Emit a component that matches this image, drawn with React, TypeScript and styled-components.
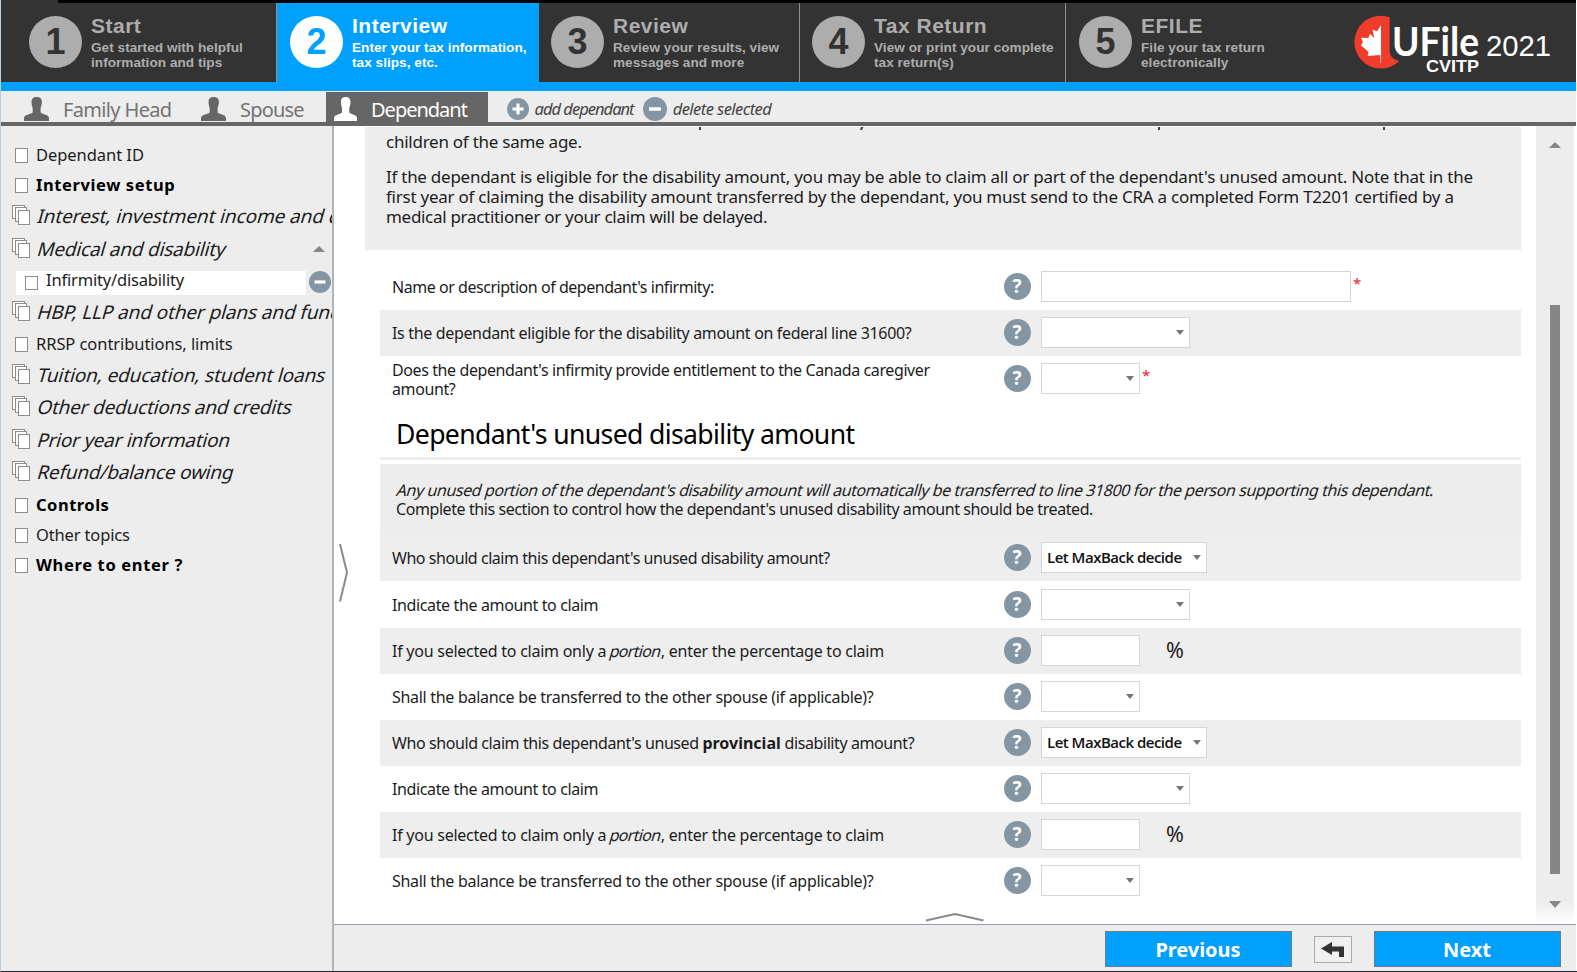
import React from "react";
import styled, { createGlobalStyle, css } from "styled-components";

const GlobalStyle = createGlobalStyle`
  *, *::before, *::after { box-sizing: border-box; }
  body { margin: 0; background: #fff; }
`;

const ui = `"Noto Sans", "Open Sans", sans-serif`;
const arial = `"Liberation Sans", Arial, sans-serif`;
const slate = "#8496a3";

const Window = styled.div`
  width: 1577px;
  height: 972px;
  overflow: hidden;
  display: flex;
  flex-direction: column;
  background: #fff;
  border-left: 1px solid #b9cde2;
  border-bottom: 1px solid #2a2a2e;
  font-family: ${ui};
  color: #1c1c1c;
`;

const TopEdge = styled.div`
  height: 3px;
  margin-right: 1px;
  background: linear-gradient(to right, #333 57px, #000 57px);
  flex: none;
`;

const Header = styled.header`
  display: flex;
  height: 88px;
  flex: none;
  margin-right: 1px;
  background: #333;
  border-bottom: 9px solid #00a0ff;
`;

const Step = styled.div<{ $w: number; $pad: number; $active?: boolean; $line?: boolean }>`
  width: ${(p) => p.$w}px;
  padding: 13px 0 0 ${(p) => p.$pad}px;
  display: flex;
  flex: none;
  color: ${(p) => (p.$active ? "#fff" : "#adadad")};
  background: ${(p) => (p.$active ? "#00a0ff" : "#333")};
  border-right: ${(p) => (p.$line ? "1px solid #8b8f92" : "none")};
  font-family: ${arial};
  font-weight: bold;
`;

const StepNumber = styled.div<{ $active?: boolean }>`
  width: 53px;
  height: 52px;
  border-radius: 50%;
  flex: none;
  background: ${(p) => (p.$active ? "#fff" : "#adadad")};
  color: ${(p) => (p.$active ? "#00a0ff" : "#333")};
  font-size: 36px;
  line-height: 51px;
  text-align: center;
`;

const StepText = styled.div`
  margin: -2px 0 0 9px;
  white-space: nowrap;
`;

const StepTitle = styled.div`
  font-size: 21px;
  line-height: 23px;
  letter-spacing: 0.5px;
`;

const StepNote = styled.div`
  margin-top: 3px;
  font-size: 13.6px;
  line-height: 15px;
  letter-spacing: 0.03px;
`;

const LogoArea = styled.div`
  margin-left: auto;
  width: 226px;
`;

const TabBar = styled.nav`
  display: flex;
  height: 35px;
  flex: none;
  margin-right: 1px;
  background: #ededed;
  border-bottom: 4px solid #666;
`;

const Tab = styled.div<{ $w: number; $pad: number; $active?: boolean }>`
  width: ${(p) => p.$w}px;
  padding-left: ${(p) => p.$pad}px;
  gap: 14px;
  display: flex;
  align-items: flex-start;
  flex: none;
  margin-top: 1px;
  background: ${(p) => (p.$active ? "#666" : "transparent")};
  color: ${(p) => (p.$active ? "#fff" : "#737373")};
  font-size: 20px;
  line-height: 35px;
  white-space: nowrap;
  svg { margin-top: 5px; flex: none; }
`;

const TabLabel = styled.span<{ $track: number }>`
  letter-spacing: ${(p) => p.$track}px;
`;

const TabAction = styled.div<{ $ml: number; $track: number }>`
  margin-left: ${(p) => p.$ml}px;
  gap: 6px;
  display: flex;
  align-items: center;
  font-size: 16.5px;
  font-style: italic;
  letter-spacing: ${(p) => p.$track}px;
  color: #444;
  white-space: nowrap;
  padding-top: 4px;
`;

const Body = styled.div`
  display: flex;
  flex: 1;
  min-height: 0;
`;

const Sidebar = styled.aside`
  width: 333px;
  flex: none;
  overflow: hidden;
  background: #ededed;
  border-right: 2px solid #aeb6bd;
  padding-top: 14px;
`;

const NavRow = styled.div<{ $h: number; $child?: boolean }>`
  display: flex;
  height: ${(p) => p.$h}px;
  align-items: flex-start;
  white-space: nowrap;
  ${(p) => p.$child && css`padding-left: 15px;`}
`;

const NavIcon = styled.span<{ $child?: boolean }>`
  width: ${(p) => (p.$child ? 30 : 35)}px;
  padding-left: ${(p) => (p.$child ? 9 : 11)}px;
  flex: none;
  display: flex;
`;

const NavLabel = styled.span<{ $kind: "plain" | "bold" | "group"; $track: number }>`
  font-size: ${(p) => (p.$kind === "group" ? 19 : 16.5)}px;
  line-height: ${(p) => (p.$kind === "group" ? 28 : 30)}px;
  font-weight: ${(p) => (p.$kind === "bold" ? 700 : 400)};
  letter-spacing: ${(p) => p.$track}px;
  color: ${(p) => (p.$kind === "bold" ? "#000" : "#1c1c1c")};
  ${(p) => p.$kind === "group" && css`
    transform: skewX(-16deg);
    margin-left: 2px;
  `}
`;

const SelectedBox = styled.div`
  display: flex;
  width: 290px;
  height: 24px;
  margin: 5px 3px 0 0;
  background: #fff;
  ${NavLabel} { line-height: 18px; }
`;

const Main = styled.main`
  flex: 1;
  min-width: 0;
  display: flex;
  flex-direction: column;
  position: relative;
`;

const Scroller = styled.div`
  display: flex;
  height: 798px;
  flex: none;
`;

const Page = styled.div`
  width: 1187px;
  margin-right: 15px;
  padding-left: 31px;
  flex: none;
`;

const Info = styled.section`
  height: 124px;
  background: #ededed;
  padding-left: 21px;
  font-size: 17px;
  line-height: 20px;
  white-space: nowrap;
  border-top: 1px solid #fafafa;
  p { margin: 0 0 15px; }
`;

const CutLine = styled.svg`
  display: block;
  width: 1020px;
  height: 5px;
`;

const Line = styled.span<{ $track: number; $slant?: boolean }>`
  display: block;
  width: fit-content;
  letter-spacing: ${(p) => p.$track}px;
  ${(p) => p.$slant && css`
    transform: skewX(-16deg);
    margin-left: 1px;
  `}
`;

const Slant = styled.em`
  display: inline-block;
  font-style: normal;
  letter-spacing: -0.7px;
  transform: skewX(-16deg);
`;

const Strong = styled.b`
  letter-spacing: 0;
`;

const Form = styled.section`
  padding-left: 15px;
`;

const Field = styled.div<{ $shade?: boolean; $h: number }>`
  display: flex;
  align-items: center;
  height: ${(p) => p.$h}px;
  padding: 0 0 1px 12px;
  background: ${(p) => (p.$shade ? "#eee" : "#fff")};
`;

const Question = styled.div<{ $track: number }>`
  width: 611.5px;
  flex: none;
  font-size: 16px;
  line-height: 19px;
  letter-spacing: ${(p) => p.$track}px;
  white-space: pre;
  padding-top: 2px;
`;

const Help = styled.div`
  width: 27px;
  height: 27px;
  border-radius: 50%;
  background: ${slate};
  color: #fff;
  font: bold 19px/27px ${ui};
  text-align: center;
  margin-right: 10.5px;
`;

const Box = styled.div<{ $w: number }>`
  width: ${(p) => p.$w}px;
  height: 31px;
  padding: 0 5px;
  display: flex;
  align-items: center;
  border: 1px solid #d6d6d6;
  background: #fff;
  font: 600 15px/29px "Open Sans", "Noto Sans", sans-serif;
  letter-spacing: -0.5px;
  white-space: nowrap;
  color: #111;
`;

const Caret = styled.i`
  margin-left: auto;
  border: 4px solid transparent;
  border-top: 5px solid #777;
  border-bottom: 0;
`;

const Required = styled.span`
  align-self: flex-start;
  margin: 8px 0 0 2px;
  font-size: 15px;
  line-height: 23px;
  color: #e8202a;
`;

const Percent = styled.span`
  margin-left: 26px;
  font-size: 21.5px;
  line-height: 28px;
`;

const SectionTitle = styled.h2`
  margin: 0;
  height: 58px;
  padding: 12px 0 0 16px;
  border-bottom: 3px solid #eee;
  font-size: 26.6px;
  font-weight: 400;
  line-height: 40px;
  letter-spacing: -0.64px;
  color: #000;
`;

const SectionNote = styled.div`
  height: 71.400px;
  margin-top: 4px;
  padding: 17px 0 0 16px;
  background: #ededed;
  font-size: 16px;
  line-height: 19px;
  white-space: nowrap;
`;

const Scrollbar = styled.div`
  width: 38px;
  display: flex;
  flex-direction: column;
  align-items: center;
  padding: 16px 0 0 0;
  background: linear-gradient(#ededed 775px, #fff);
`;

const Arrow = styled.i<{ $down?: boolean }>`
  border: 6px solid transparent;
  border-bottom: ${(p) => (p.$down ? "0" : "6px solid #868686")};
  border-top: ${(p) => (p.$down ? "7px solid #868686" : "0")};
`;

const Thumb = styled.div`
  width: 10px;
  height: 569px;
  margin: 157px 0 27px;
  background: #868686;
`;

const Footer = styled.footer`
  flex: 1;
  display: flex;
  align-items: flex-start;
  justify-content: flex-end;
  margin-right: 1px;
  padding: 6px 15.5px 0 0;
  background: #ededed;
  border-top: 1px solid #8f9ba6;
`;

const Button = styled.button`
  width: 187px;
  height: 36px;
  padding: 2px 0 0;
  border: 1px solid #6f7c88;
  background: #00a0ff;
  color: #fff;
  font: bold 20px/32px ${ui};
  letter-spacing: -0.05px;
`;

const BackButton = styled.button`
  width: 38px;
  height: 27px;
  margin: 5px 22px 0;
  padding: 0;
  display: flex;
  align-items: center;
  justify-content: center;
  border: 1px solid #a9a9a9;
  background: #f0f0f0;
`;

const Handle = styled.svg<{ $x: number; $y: number }>`
  position: absolute;
  left: ${(p) => p.$x}px;
  top: ${(p) => p.$y}px;
`;

const Person = ({ w, color }: { w: number; color: string }) => (
  <svg width={w} height="24" viewBox="0 0 25 24" preserveAspectRatio="none" fill={color}>
    <path d="M12.700 0C9.200 0 7.400 1.900 7.500 5c.1 2.600.5 4.400 1.200 6v3.800c0 .8-.3 1.200-1.100 1.500L2.300 18.300C.7 19 0 19.900 0 21.500V24h25v-2.500c0-1.600-.7-2.500-2.300-3.200l-5-2c-.8-.3-1.100-.7-1.100-1.500V11c.7-1.600 1.200-3.400 1.300-6 .1-3.100-1.700-5-5.200-5z" />
  </svg>
);

const Round = ({ size, plus }: { size: number; plus?: boolean }) => (
  <svg width={size} height={size} viewBox="0 0 24 24">
    <circle cx="12" cy="12" r="12" fill={slate} />
    <rect x="6" y="10.300" width="12" height="3.400" fill="#fff" />
    {plus && <rect x="10.300" y="6" width="3.400" height="12" fill="#fff" />}
  </svg>
);

const SinglePage = ({ top }: { top: number }) => (
  <svg width="17" height={top + 16} fill="#fff" stroke="#8c8c8c">
    <rect x={3.5} y={top + 0.5} width="12" height="14" />
  </svg>
);

const PageStack = () => (
  <svg width="19" height="24" fill="#fff" stroke="#8c8c8c">
    <rect x="0.500" y="3.500" width="12" height="13" />
    <rect x="3.500" y="5.500" width="11" height="14" />
    <rect x="6.500" y="8.500" width="11" height="14" />
  </svg>
);

const Logo = () => (
  <svg width="226" height="79">
    <path d="M39.700 14.300 A26.400 26.400 0 1 0 49.300 58 C43 56.500 39.700 53 39.700 48Z" fill="#f03d2b" />
    <path
      d="M31 22.300 27 28.300l-4.500-1.600 1.800 8.300-4.300-4-1.700 4-7.300-.300 1.900 4.300-1.900 3.300 7.500 6.700-.8 4L30.300 52l.2 8h.6z"
      fill="#fff"
    />
    <g fill="#fff">
      <text x="42" y="53" fontFamily="Lato, sans-serif" fontWeight="700" fontSize="40" textLength="87" lengthAdjust="spacingAndGlyphs">UFile</text>
      <text x="76" y="69" fontFamily="Liberation Sans, sans-serif" fontWeight="700" fontSize="17" textLength="53" lengthAdjust="spacingAndGlyphs">CVITP</text>
      <text x="136" y="53" fontFamily="Liberation Sans, sans-serif" fontSize="29.500" textLength="65" lengthAdjust="spacingAndGlyphs">2021</text>
    </g>
  </svg>
);

const steps = [
  { w: 276, pad: 28, title: "Start", note: ["Get started with helpful", "information and tips"], line: true },
  { w: 262, pad: 13, title: "Interview", note: ["Enter your tax information,", "tax slips, etc."], active: true },
  { w: 261, pad: 12, title: "Review", note: ["Review your results, view", "messages and more"], line: true },
  { w: 266, pad: 12, title: "Tax Return", note: ["View or print your complete", "tax return(s)"], line: true },
  { w: 220, pad: 13, title: "EFILE", note: ["File your tax return", "electronically"] },
];

type NavItem = { text: string; kind: "plain" | "bold" | "group"; h: number; track: number; open?: boolean; child?: boolean };

const nav: NavItem[] = [
  { text: "Dependant ID", kind: "plain", h: 30, track: -0.05 },
  { text: "Interview setup", kind: "bold", h: 32, track: 0.6 },
  { text: "Interest, investment income and donations", kind: "group", h: 33, track: -0.1 },
  { text: "Medical and disability", kind: "group", h: 31, track: -0.2, open: true },
  { text: "Infirmity/disability", kind: "plain", h: 32, track: -0.18, child: true },
  { text: "HBP, LLP and other plans and funds", kind: "group", h: 31, track: -0.12 },
  { text: "RRSP contributions, limits", kind: "plain", h: 32, track: -0.07 },
  { text: "Tuition, education, student loans", kind: "group", h: 32, track: -0.12 },
  { text: "Other deductions and credits", kind: "group", h: 33, track: -0.2 },
  { text: "Prior year information", kind: "group", h: 32, track: -0.27 },
  { text: "Refund/balance owing", kind: "group", h: 32, track: -0.2 },
  { text: "Controls", kind: "bold", h: 30, track: 0.5 },
  { text: "Other topics", kind: "plain", h: 30, track: -0.15 },
  { text: "Where to enter ?", kind: "bold", h: 30, track: 0.65 },
];

const NavArrow = styled(Arrow)`
  margin: 11px 7px 0 auto;
`;

const NavRemove = styled.span`
  margin-top: 5px;
`;

type FieldDef = { q: React.ReactNode; w: number; select?: boolean; value?: string; required?: boolean; percent?: boolean; track: number };

const eligibility: FieldDef[] = [
  { q: "Name or description of dependant's infirmity:", w: 310, required: true, track: -0.46 },
  { q: "Is the dependant eligible for the disability amount on federal line 31600?", w: 149, select: true, track: -0.34 },
  { q: "Does the dependant's infirmity provide entitlement to the Canada caregiver\namount?", w: 99, select: true, required: true, track: -0.4 },
];

const portion = <>If you selected to claim only a <Slant>portion</Slant>, enter the percentage to claim</>;

const unused: FieldDef[] = [
  { q: "Who should claim this dependant's unused disability amount?", w: 166, select: true, value: "Let MaxBack decide", track: -0.45 },
  { q: "Indicate the amount to claim", w: 149, select: true, track: -0.37 },
  { q: portion, w: 99, percent: true, track: -0.25 },
  { q: "Shall the balance be transferred to the other spouse (if applicable)?", w: 99, select: true, track: -0.3 },
  { q: <>Who should claim this dependant's unused <Strong>provincial</Strong> disability amount?</>, w: 166, select: true, value: "Let MaxBack decide", track: -0.41 },
  { q: "Indicate the amount to claim", w: 149, select: true, track: -0.37 },
  { q: portion, w: 99, percent: true, track: -0.25 },
  { q: "Shall the balance be transferred to the other spouse (if applicable)?", w: 99, select: true, track: -0.3 },
];

const FieldRow = ({ f, shade, h }: { f: FieldDef; shade: boolean; h: number }) => (
  <Field $shade={shade} $h={h}>
    <Question $track={f.track}>{f.q}</Question>
    <Help>?</Help>
    <Box $w={f.w}>
      {f.value}
      {f.select && <Caret />}
    </Box>
    {f.required && <Required>*</Required>}
    {f.percent && <Percent>%</Percent>}
  </Field>
);

const FormTop = styled.div`
  height: 14px;
`;

export default function App() {
  return (
    <Window>
      <GlobalStyle />
      <TopEdge />
      <Header>
        {steps.map((s, i) => (
          <Step key={s.title} $w={s.w} $pad={s.pad} $active={s.active} $line={s.line}>
            <StepNumber $active={s.active}>{i + 1}</StepNumber>
            <StepText>
              <StepTitle>{s.title}</StepTitle>
              <StepNote>
                {s.note[0]}
                <br />
                {s.note[1]}
              </StepNote>
            </StepText>
          </Step>
        ))}
        <LogoArea>
          <Logo />
        </LogoArea>
      </Header>
      <TabBar>
        <Tab $w={177} $pad={23}>
          <Person w={25} color="#666" />
          <TabLabel $track={-0.65}>Family Head</TabLabel>
        </Tab>
        <Tab $w={148} $pad={23}>
          <Person w={25} color="#666" />
          <TabLabel $track={-0.8}>Spouse</TabLabel>
        </Tab>
        <Tab $w={162} $pad={8} $active>
          <Person w={23} color="#fff" />
          <TabLabel $track={-1}>Dependant</TabLabel>
        </Tab>
        <TabAction $ml={18.5} $track={-0.98}>
          <Round size={22} plus />
          add dependant
        </TabAction>
        <TabAction $ml={9} $track={-0.55}>
          <Round size={24} />
          delete selected
        </TabAction>
      </TabBar>
      <Body>
        <Sidebar>
          {nav.map((n) =>
            n.child ? (
              <NavRow key={n.text} $h={n.h} $child>
                <SelectedBox>
                  <NavIcon $child>
                    <svg width="14" height="20" fill="#fff" stroke="#8c8c8c">
                      <rect x="0.500" y="5.500" width="12" height="13" />
                    </svg>
                  </NavIcon>
                  <NavLabel $kind={n.kind} $track={n.track}>{n.text}</NavLabel>
                </SelectedBox>
                <NavRemove>
                  <Round size={22} />
                </NavRemove>
              </NavRow>
            ) : (
              <NavRow key={n.text} $h={n.h}>
                <NavIcon>{n.kind === "group" ? <PageStack /> : <SinglePage top={8} />}</NavIcon>
                <NavLabel $kind={n.kind} $track={n.track}>{n.text}</NavLabel>
                {n.open && <NavArrow />}
              </NavRow>
            )
          )}
        </Sidebar>
        <Main>
          <Scroller>
            <Page>
              <Info>
                <CutLine fill="#444">
                  <rect x="313" y="0" width="2" height="3" />
                  <path d="M475 0h2.500l-1.500 3h-2z" />
                  <rect x="772" y="0" width="2" height="3" />
                  <rect x="997" y="0" width="2" height="3" />
                </CutLine>
                <p>
                  <Line $track={-0.25}>children of the same age.</Line>
                </p>
                <p>
                  <Line $track={-0.26}>If the dependant is eligible for the disability amount, you may be able to claim all or part of the dependant's unused amount. Note that in the</Line>
                  <Line $track={-0.245}>first year of claiming the disability amount transferred by the dependant, you must send to the CRA a completed Form T2201 certified by a</Line>
                  <Line $track={-0.3}>medical practitioner or your claim will be delayed.</Line>
                </p>
              </Info>
              <Form>
                <FormTop />
                {eligibility.map((f, i) => (
                  <FieldRow key={i} f={f} shade={i === 1} h={46} />
                ))}
                <SectionTitle>Dependant's unused disability amount</SectionTitle>
                <SectionNote>
                  <Line $track={-0.41} $slant>
                    Any unused portion of the dependant's disability amount will automatically be transferred to line 31800 for the person supporting this dependant.
                  </Line>
                  <Line $track={-0.42}>Complete this section to control how the dependant's unused disability amount should be treated.</Line>
                </SectionNote>
                {unused.map((f, i) => (
                  <FieldRow key={i} f={f} shade={i % 2 === 0} h={46.08} />
                ))}
              </Form>
            </Page>
            <Scrollbar>
              <Arrow />
              <Thumb />
              <Arrow $down />
            </Scrollbar>
          </Scroller>
          <Footer>
            <Button>Previous</Button>
            <BackButton>
              <svg width="24" height="16" viewBox="0 0 24 16" fill="#333">
                <path d="M0 6.500 11 0v4.500h12V15h-5V9.500h-7V13z" />
              </svg>
            </BackButton>
            <Button>Next</Button>
          </Footer>
          <Handle $x={4} $y={417} width="12" height="60" fill="none" stroke="#8a8a8a" strokeWidth="2">
            <path d="M2 1 9 29.500 2 58.500" />
          </Handle>
          <Handle $x={591} $y={786} width="60" height="10" fill="none" stroke="#8a8a8a" strokeWidth="2">
            <path d="M1 8.500 30 2 58.500 8.500" />
          </Handle>
        </Main>
      </Body>
    </Window>
  );
}
